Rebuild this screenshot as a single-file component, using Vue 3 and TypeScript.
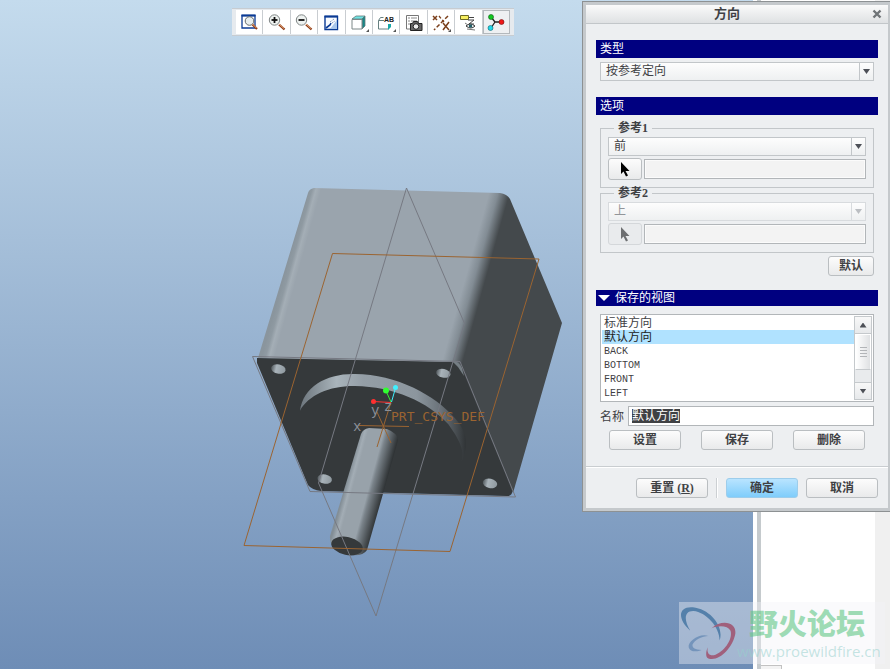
<script setup lang="ts">
import { ref } from 'vue'

const orientType = ref('按参考定向')
const firstRef = ref('前')
const secondRef = ref('上')
const views = ['标准方向', '默认方向', 'BACK', 'BOTTOM', 'FRONT', 'LEFT']
const selected = ref('默认方向')
const expanded = ref(true)
const list = ref<HTMLUListElement | null>(null)

const tools = [
  { id: 'refit', label: '重新调整' },
  { id: 'in', label: '放大' },
  { id: 'out', label: '缩小' },
  { id: 'repaint', label: '重画' },
  { id: 'style', label: '显示样式' },
  { id: 'named', label: '已命名视图' },
  { id: 'manager', label: '视图管理器' },
  { id: 'datum', label: '基准显示' },
  { id: 'notes', label: '注释显示' },
  { id: 'spin', label: '旋转中心' },
]
const active = ref('spin')

function scrollList(step: number) {
  list.value?.scrollBy({ top: step * 14 })
}
</script>

<template>
  <div class="workspace">
    <main class="canvas">
      <svg class="scene" viewBox="0 0 753 669" preserveAspectRatio="xMinYMin meet" role="img" aria-label="模型">
        <defs>
          <linearGradient id="body" gradientUnits="userSpaceOnUse" x1="308" y1="190" x2="549" y2="257">
            <stop offset="0" stop-color="#8a959d" />
            <stop offset=".015" stop-color="#8f9aa2" />
            <stop offset=".03" stop-color="#a4aeb6" />
            <stop offset=".05" stop-color="#9aa4ad" />
            <stop offset=".7" stop-color="#9aa4ad" />
            <stop offset=".735" stop-color="#828c94" />
            <stop offset=".78" stop-color="#44494c" />
            <stop offset="1" stop-color="#44494c" />
          </linearGradient>
          <linearGradient id="ring" x1="0" x2="1" y1="0" y2="0">
            <stop offset="0" stop-color="#6d767d" />
            <stop offset=".22" stop-color="#a9b4bb" />
            <stop offset=".38" stop-color="#949ea6" />
            <stop offset=".7" stop-color="#8c969e" />
            <stop offset=".85" stop-color="#697178" />
            <stop offset="1" stop-color="#303436" />
          </linearGradient>
          <linearGradient id="shaft" gradientUnits="userSpaceOnUse" x1="347" y1="480" x2="384" y2="490">
            <stop offset="0" stop-color="#838e96" />
            <stop offset=".12" stop-color="#a3adb5" />
            <stop offset=".2" stop-color="#98a2aa" />
            <stop offset=".6" stop-color="#98a2aa" />
            <stop offset=".68" stop-color="#7a838a" />
            <stop offset="1" stop-color="#303436" />
          </linearGradient>
          <linearGradient id="hole">
            <stop offset="0" stop-color="#50575b" />
            <stop offset=".35" stop-color="#a9b3ba" />
            <stop offset="1" stop-color="#8f999f" />
          </linearGradient>
        </defs>
        <path fill="url(#body)" d="M308 193Q309 189 314 188L500 193Q507 194 510 199L562 323L513 493L458 368L258 358Z" />
        <path fill="#35393b" d="M257 358L452 362Q459 363 462 369L512 490Q513 496 507 496L321 491Q312 490 308 485L257 363Z" />
        <path fill="#757e84" d="M452 361Q459 361 462 368L464 376L458 367Z" />
        <g transform="translate(240 345) scale(.33333)">
          <path fill="url(#ring)" d="M180 197C190 125 260 85 345 87C470 88 585 150 645 220C685 265 685 305 665 350C675 315 655 280 625 238C565 170 460 125 345 123C270 122 205 150 180 197Z" />
          <g fill="url(#hole)">
            <ellipse cx="115" cy="72" rx="22" ry="14" transform="rotate(12 115 72)" />
            <ellipse cx="610" cy="85" rx="22" ry="13" transform="rotate(12 610 85)" />
            <ellipse cx="254" cy="402" rx="22" ry="14" transform="rotate(12 254 402)" />
            <ellipse cx="750" cy="415" rx="22" ry="14" transform="rotate(12 750 415)" />
          </g>
        </g>
        <path fill="url(#shaft)" d="M361 434Q363 429 369 428L387 429Q399 434 398 441L367 550Q362 558 344 554Q329 548 330 536Z" />
        <ellipse cx="347" cy="546" rx="16" ry="9" transform="rotate(12 347 546)" fill="#35393b" />
        <g fill="none" stroke="#767982">
          <path d="M252.500 356.500L460 361.500L515.500 497L310 491.500Z" />
          <path d="M406.500 188L464.500 323.500L376 616L318.500 483Z" />
        </g>
        <g fill="none" stroke="#9b6431">
          <path d="M332.500 253.500L539 259L450 551.500L244 545.500Z" />
          <path d="M359 425.500L409 426.500M391 402L377 447M377 412L391 443" />
        </g>
        <g class="axis-label">
          <text x="353" y="431">x</text>
          <text x="371" y="415">y</text>
          <text x="384" y="411">z</text>
        </g>
        <text class="csys" x="391" y="421">PRT_CSYS_DEF</text>
        <g fill="none">
          <path stroke="#ff3030" d="M373 401.500L391 402.500" />
          <path stroke="#30f030" d="M391 402L386 391" />
          <path stroke="#40f0ff" d="M391.500 402L395.500 388" />
        </g>
        <circle cx="373.500" cy="401.500" r="2.500" fill="#ff3030" />
        <circle cx="386" cy="390.500" r="3" fill="#30ff30" />
        <circle cx="395.500" cy="387.500" r="2.500" fill="#40f0ff" />
      </svg>

      <div class="toolbar" role="toolbar" aria-label="视图">
        <button
          v-for="t in tools"
          :key="t.id"
          type="button"
          class="tool"
          :class="{ pressed: active === t.id }"
          :aria-label="t.label"
          @click="active = t.id"
        >
          <svg width="20" height="20" viewBox="0 0 20 20" fill="none" aria-hidden="true">
            <g v-if="t.id === 'refit'">
              <path stroke="#0a3a94" stroke-width="1.300" d="M3 3.500h13v12.500h-13z" />
              <path stroke="#0a3a94" stroke-width="2" d="M2.500 3.500h14" />
              <circle cx="10.500" cy="9" r="4.300" fill="#e8eeee" stroke="#656a6a" />
              <path stroke="#8d3a16" stroke-width="2.200" d="M13.500 12.500l4.500 4.500" />
              <path stroke="#e6a878" d="M13.500 12l4 4" />
            </g>
            <g v-else-if="t.id === 'in' || t.id === 'out'">
              <circle cx="7.500" cy="8" r="5.200" fill="#eef2f0" stroke="#808686" />
              <path stroke="#111" stroke-width="1.800" d="M4.500 8h6" />
              <path v-if="t.id === 'in'" stroke="#111" stroke-width="1.800" d="M7.500 5v6" />
              <path stroke="#8d3a16" stroke-width="2.200" d="M12 12.500l5.500 5" />
              <path stroke="#e6a878" d="M12 12l5 4.500" />
            </g>
            <g v-else-if="t.id === 'repaint'">
              <path fill="#f8fbff" stroke="#0a3a94" stroke-width="1.400" d="M4 4.500h12.500v13h-12.500z" />
              <path fill="#a9c6ea" d="M9 17l7-9v9z" />
              <path stroke="#0a3a94" stroke-width="2" d="M3.500 4.500h13.500" />
              <path stroke="#0a3a94" stroke-width="1.600" d="M5 16l4-3l1-2" />
              <path stroke="#6d83a8" stroke-dasharray="1 1" d="M9 10l4-3M11 11l3-2" />
            </g>
            <g v-else-if="t.id === 'style'">
              <path fill="#70e4e4" stroke="#607878" stroke-width=".8" d="M3 7l4-3h9l-3 3z" />
              <path fill="#168888" stroke="#607878" stroke-width=".8" d="M13 7l3-3v10l-3 3z" />
              <path fill="#fff" stroke="#7c8888" d="M3 7.500h10v9.500h-10z" />
              <path fill="#555" d="M20 17v3h-3z" />
            </g>
            <g v-else-if="t.id === 'named'">
              <path stroke="#668080" d="M8 8.500h-5.500v8.500h10v-3M2.500 8.500l2-3h3" />
              <path fill="#18a8a8" d="M12 12h3v3l-3 3z" />
              <text x="8" y="10" class="icon-text">AB</text>
              <path fill="#555" d="M20 17v3h-3z" />
            </g>
            <g v-else-if="t.id === 'manager'">
              <path fill="#fff" stroke="#777" d="M2.500 3.500h12v13.500h-12z" />
              <path stroke="#888" d="M4 6h2M7 6h6M4 9h2M7 9h6M4 12h2" />
              <path fill="#666" stroke="#222" d="M6.500 11.500h2l1-2h4l1 2h3.500v7h-11.500z" />
              <circle cx="12" cy="14.500" r="2.800" fill="#eee" stroke="#222" />
            </g>
            <g v-else-if="t.id === 'datum'">
              <path stroke="#7b3f1b" stroke-width="1.500" d="M2 4l4 4M6 4l-4 4M12 11l6 7M18 10l-6 8" />
              <path stroke="#7b3f1b" stroke-width="1.500" stroke-dasharray="4 2" d="M17 4l-14 14" />
              <path stroke="#7b3f1b" stroke-width="1.300" d="M8 4l5 6" stroke-dasharray="3 2" />
              <path fill="#555" d="M20 17v3h-3z" />
            </g>
            <g v-else-if="t.id === 'notes'">
              <path fill="#f7ef60" stroke="#6e6a26" d="M2.500 3.500h8v4h-8z" />
              <path stroke="#444" d="M11 5.500h5M10 8h6l-5 4h5" />
              <path fill="#fff" stroke="#333" d="M8 14q4-4 9 0q-4 4-9 0z" />
              <circle cx="12.500" cy="14" r="1.800" fill="#26606a" />
              <path stroke="#777" d="M7 11l3 2M9 17l8 1" />
            </g>
            <g v-else>
              <path stroke="#222" stroke-width="1.300" d="M5 5l4 5h7M9 10l-4 6" />
              <circle cx="5" cy="5" r="2.500" fill="#10c820" stroke="#0b5a12" stroke-width=".6" />
              <circle cx="15.500" cy="10" r="2.500" fill="#f01818" stroke="#701010" stroke-width=".6" />
              <circle cx="4.500" cy="16" r="2.500" fill="#20d8e8" stroke="#0c6070" stroke-width=".6" />
            </g>
          </svg>
        </button>
      </div>
    </main>

    <aside class="side">
      <div class="side-page"><span class="side-tab"></span></div>
      <div class="side-edge"></div>
    </aside>

    <div class="watermark">
      <svg width="58" height="62" viewBox="27 276 180 186" aria-hidden="true">
        <path fill="#5480aa" d="M62 362C20 325 25 285 70 289C125 295 168 350 153 392C153 350 110 304 72 301C42 300 42 330 62 362Z" />
        <path fill="#a0607c" d="M128 354C160 325 205 335 202 370C195 415 150 460 118 448C108 443 111 425 116 413C113 430 120 440 135 438C165 430 195 390 187 362C178 345 150 345 128 354Z" />
        <path fill="#7494bb" d="M118 378C90 368 54 395 57 413C62 430 85 427 97 422C78 422 67 415 69 405C75 390 100 378 118 378Z" />
      </svg>
      <div class="mark-text">
        <strong>野火论坛</strong>
        <span>www.proewildfire.cn</span>
      </div>
    </div>

    <section class="dialog" role="dialog" aria-labelledby="dialog-title">
      <header class="titlebar">
        <h1 id="dialog-title">方向</h1>
        <button type="button" class="close" aria-label="关闭">
          <svg width="10" height="10" viewBox="0 0 10 10"><path d="M1.500 1.500l7 7M8.500 1.500l-7 7" stroke="#6f7477" stroke-width="2.400" /></svg>
        </button>
      </header>

      <div class="content">
        <h2 class="bar">类型</h2>
        <div class="combo type-combo">
          <select v-model="orientType" aria-label="类型">
            <option>按参考定向</option>
            <option>动态定向</option>
          </select>
          <span class="arrow"></span>
        </div>

        <h2 class="bar">选项</h2>
        <div class="options">
          <fieldset>
            <legend>参考1</legend>
            <div class="combo">
              <select v-model="firstRef" aria-label="参考1">
                <option>前</option>
                <option>后</option>
              </select>
              <span class="arrow"></span>
            </div>
            <div class="pick">
              <button type="button" class="btn" aria-label="选取参考1">
                <svg width="10" height="15" viewBox="0 0 10 15"><path fill="#000" d="M1 0v12l2.500-2.500l2.500 5l2-1l-2.500-4.500h4z" /></svg>
              </button>
              <input type="text" readonly aria-label="参考1 几何" />
            </div>
          </fieldset>
          <fieldset disabled>
            <legend>参考2</legend>
            <div class="combo off">
              <select v-model="secondRef" aria-label="参考2">
                <option>上</option>
                <option>下</option>
              </select>
              <span class="arrow"></span>
            </div>
            <div class="pick">
              <button type="button" class="btn" aria-label="选取参考2">
                <svg width="10" height="15" viewBox="0 0 10 15"><path fill="#6d6f71" d="M1 0v12l2.500-2.500l2.500 5l2-1l-2.500-4.500h4z" /></svg>
              </button>
              <input type="text" readonly aria-label="参考2 几何" />
            </div>
          </fieldset>
          <button type="button" class="btn default">默认</button>
        </div>

        <h2 class="bar saved">
          <button type="button" :aria-expanded="expanded" @click="expanded = !expanded">
            <svg width="12" height="6" viewBox="0 0 12 6" aria-hidden="true"><path fill="#fff" d="M0 0h12l-6 6z" /></svg>
            保存的视图
          </button>
        </h2>
        <div v-show="expanded" class="views">
          <div class="listbox">
            <ul ref="list" role="listbox" aria-label="保存的视图" tabindex="0">
              <li
                v-for="v in views"
                :key="v"
                role="option"
                :aria-selected="v === selected"
                :class="{ current: v === selected }"
                @click="selected = v"
              >{{ v }}</li>
            </ul>
            <div class="scrollbar">
              <button type="button" aria-label="向上滚动" @click="scrollList(-1)"><span class="tri up"></span></button>
              <div class="track"><div class="thumb"><i></i><i></i><i></i><i></i></div></div>
              <button type="button" aria-label="向下滚动" @click="scrollList(1)"><span class="tri"></span></button>
            </div>
          </div>
          <div class="name-row">
            <label for="view-name">名称</label>
            <div class="name-box"><input id="view-name" v-model="selected" type="text" /></div>
          </div>
          <div class="view-actions">
            <button type="button" class="btn wide">设置</button>
            <button type="button" class="btn wide">保存</button>
            <button type="button" class="btn wide">删除</button>
          </div>
        </div>
      </div>

      <footer class="footer">
        <button type="button" class="btn wide">重置 (<u>R</u>)</button>
        <span class="divider"></span>
        <button type="button" class="btn wide primary">确定</button>
        <button type="button" class="btn wide">取消</button>
      </footer>
    </section>
  </div>
</template>

<style>
body {
  margin: 0;
}
</style>

<style scoped>
.workspace,
.workspace * {
  box-sizing: border-box;
}
.workspace {
  position: relative;
  display: flex;
  height: 100vh;
  overflow: hidden;
  font-family: "Liberation Serif", "Noto Sans CJK SC", serif;
  font-size: 12px;
  color: #3f4144;
}
button,
input,
select {
  margin: 0;
  padding: 0;
  font: inherit;
  color: inherit;
  border-radius: 0;
}
.canvas {
  position: relative;
  flex: 1;
  min-width: 0;
  background: linear-gradient(#c4dbed, #6e8db6);
}
.scene {
  display: block;
  width: 100%;
  height: 100%;
}
.csys {
  font: 13px "DejaVu Sans Mono", monospace;
  fill: #9b6431;
}
.axis-label {
  font: 14px "Liberation Mono", monospace;
  fill: #8b9098;
}
.icon-text {
  font: bold 7px "Liberation Sans", sans-serif;
  fill: #222;
}
.toolbar {
  position: absolute;
  top: 8px;
  left: 232px;
  display: grid;
  grid-template-columns: repeat(10, 1fr);
  width: 282px;
  height: 28px;
  padding: 1px 4px;
  background: #e6eaee;
  border: 1px solid #c7ccd1;
  border-width: 1px 0;
}
.tool {
  display: flex;
  align-items: center;
  justify-content: center;
  background: #fff;
  border: 0;
  border-right: 1px solid #c9cdd1;
}
.tool.pressed {
  background: #eef0f2;
  border: 1px solid #b3b8bc;
}
.side {
  display: flex;
  width: 137px;
  background: #fff;
  border-left: 4px solid #fff;
}
.side-page {
  display: flex;
  flex: 1;
  align-items: flex-end;
  border-left: 4px solid #c5cacd;
}
.side-tab {
  width: 21px;
  height: 4px;
  background: #f3f3f3;
  border: 1px solid #c2c2c2;
  border-width: 1px 1px 0 0;
}
.side-edge {
  width: 15px;
  background: #f0f0f0;
}
.watermark {
  position: absolute;
  right: 5px;
  bottom: 5px;
  display: flex;
  width: 206px;
  height: 62px;
  background: rgba(242, 242, 248, 0.4);
}
.mark-text {
  display: flex;
  flex-direction: column;
  white-space: nowrap;
}
.mark-text strong {
  padding: 3px 0 0 12px;
  font: 900 29px/34px "Noto Sans CJK SC", sans-serif;
  color: rgba(96, 198, 134, 0.6);
}
.mark-text span {
  font: 15px/24px "Open Sans", sans-serif;
  color: rgba(150, 208, 204, 0.55);
}
.dialog {
  position: absolute;
  top: 2px;
  right: 0;
  width: 307px;
  background: #edeff1;
  border: 3px solid #c5c9cc;
  border-right-width: 2px;
  box-shadow: 0 0 0 1px #8d9193;
}
.titlebar {
  display: flex;
  align-items: center;
  height: 19px;
  padding: 0 6px 0 8px;
  background: linear-gradient(#fafafa, #dfe1e3);
  border-bottom: 1px solid #c2c6c9;
}
.titlebar h1 {
  flex: 1;
  margin: 0;
  padding: 0 12px 0 0;
  font-size: 13px;
  line-height: 18px;
  text-align: center;
}
.close {
  display: flex;
  background: none;
  border: 0;
}
.content {
  padding: 16px 10px;
  border-bottom: 1px solid #c9cdd0;
}
.bar {
  height: 18px;
  margin: 0;
  padding-left: 4px;
  font-size: 12px;
  font-weight: 400;
  line-height: 19px;
  color: #fff;
  background: #000080;
}
.combo {
  display: flex;
  height: 19px;
  background: linear-gradient(#fdfdfd, #eef0f1);
  border: 1px solid #c2c6c9;
}
.type-combo {
  margin: 4px 4px 16px;
}
.combo select {
  flex: 1;
  min-width: 0;
  padding-left: 5px;
  line-height: 17px;
  appearance: none;
  background: none;
  border: 0;
  opacity: 1;
}
.arrow {
  display: flex;
  align-items: center;
  justify-content: center;
  width: 14px;
  border-left: 1px solid #c2c6c9;
}
.arrow::after,
.tri {
  content: "";
  width: 7px;
  height: 5px;
  background: #4d5057;
  clip-path: polygon(0 0, 100% 0, 50% 100%);
}
.tri.up {
  clip-path: polygon(50% 0, 100% 100%, 0 100%);
}
.combo.off,
.combo.off .arrow {
  border-color: #d8dbde;
}
.combo.off select {
  color: #929599;
}
.combo.off .arrow::after {
  background: #bbbec2;
}
.options {
  display: flex;
  flex-direction: column;
  padding: 8px 4px 14px;
}
fieldset {
  min-width: 0;
  margin: 0;
  padding: 3px 7px 7px;
  border: 1px solid #c2c6c9;
}
legend {
  margin-left: 6px;
  padding: 0 4px;
  font-weight: 700;
  line-height: 11px;
}
.pick {
  display: flex;
  gap: 2px;
  align-items: center;
  margin-top: 2px;
}
.pick .btn {
  width: 34px;
  height: 22px;
}
.pick input {
  flex: 1;
  min-width: 0;
  height: 20px;
  background: #f3f3f3;
  border: 1px solid #b2b6b9;
  outline: 1px solid #fbfbfb;
  outline-offset: -2px;
}
.btn {
  display: flex;
  align-items: center;
  justify-content: center;
  height: 20px;
  font-weight: 700;
  line-height: 18px;
  white-space: pre;
  background: linear-gradient(#fcfcfc, #e9eaeb);
  border: 1px solid #babec1;
  border-radius: 3px;
}
.btn:disabled {
  background: #e9ebed;
  border-color: #d4d7da;
}
.btn.wide {
  width: 72px;
}
.btn.default {
  align-self: flex-end;
  width: 46px;
  margin-top: 3px;
}
.btn.primary {
  background: linear-gradient(#b9e4ff, #7fcdfb);
  border-color: #9dcdeb;
}
.bar.saved {
  height: 16px;
  padding-left: 2px;
  line-height: 16px;
}
.saved button {
  display: flex;
  gap: 5px;
  align-items: center;
  height: 16px;
  line-height: 16px;
  background: none;
  border: 0;
}
.views {
  padding: 8px 4px 0;
}
.listbox {
  display: flex;
  height: 88px;
  padding: 1px;
  background: #fff;
  border: 1px solid #b2b6b9;
}
.listbox ul {
  flex: 1;
  margin: 0;
  padding: 0;
  overflow: hidden;
  font-family: "Liberation Mono", "Noto Sans CJK SC", monospace;
  list-style: none;
  outline: 0;
}
.listbox li {
  height: 14px;
  padding-left: 2px;
  font-size: 12px;
  line-height: 16px;
}
.listbox li:nth-child(n + 3) {
  font-size: 10px;
  line-height: 15px;
}
.listbox li.current {
  color: #222;
  background: #b0e2ff;
}
.scrollbar {
  display: flex;
  flex-direction: column;
  width: 18px;
  background: #e9ebed;
  border: 1px solid #c5c9cc;
}
.scrollbar button {
  display: flex;
  align-items: center;
  justify-content: center;
  height: 16px;
  background: linear-gradient(#f8f8f8, #e7e9eb);
  border: 0;
}
.track {
  flex: 1;
  border: 1px solid #c5c9cc;
  border-width: 1px 0;
}
.thumb {
  display: flex;
  flex-direction: column;
  gap: 2px;
  align-items: center;
  justify-content: center;
  height: 36px;
  background: linear-gradient(90deg, #fff, #dfe1e3);
  border: 1px solid #fff;
  border-bottom-color: #c5c9cc;
}
.thumb i {
  width: 7px;
  height: 1px;
  background: #b2b5b8;
}
.name-row {
  display: flex;
  gap: 4px;
  align-items: center;
  margin: 4px 0;
}
.name-box {
  display: flex;
  flex: 1;
  align-items: center;
  height: 20px;
  padding: 0 3px;
  background: #fff;
  border: 1px solid #b2b6b9;
}
.name-box input {
  field-sizing: content;
  height: 14px;
  line-height: 14px;
  color: #fff;
  background: #3f4144;
  border: 0;
  outline: 0;
}
.view-actions {
  display: flex;
  justify-content: space-between;
  padding: 0 9px;
}
.footer {
  display: flex;
  align-items: center;
  justify-content: flex-end;
  gap: 8px;
  padding: 10px;
  border-top: 1px solid #fff;
}
.divider {
  width: 2px;
  height: 20px;
  background: #fff;
  border-left: 1px solid #ccd0d3;
}
</style>
